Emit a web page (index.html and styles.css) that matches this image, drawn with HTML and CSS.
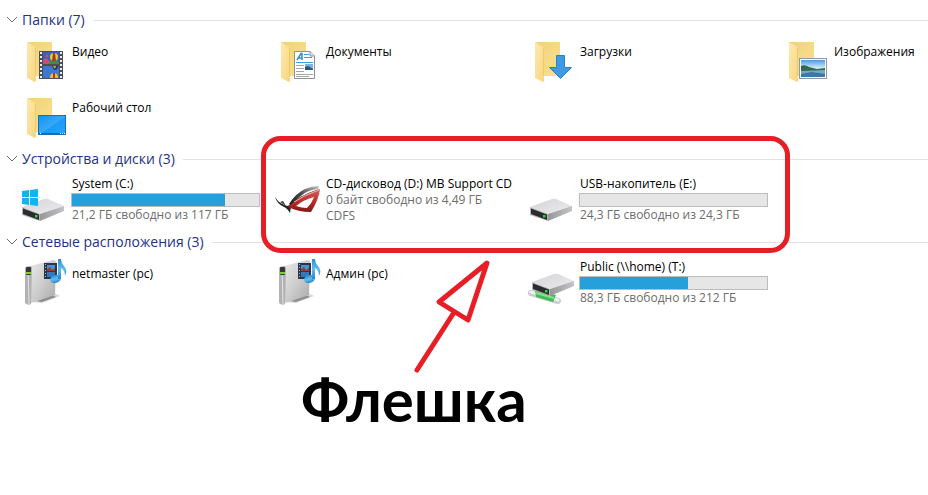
FILE: index.html
```
<!DOCTYPE html>
<html lang="ru">
<head>
    <meta charset="UTF-8">
    <meta name="viewport" content="width=device-width, initial-scale=1.0">
    <title>Этот компьютер</title>
    <link rel="stylesheet" href="styles.css">
</head>
<body>
    <!-- Общие части значков -->
    <svg class="defs" width="0" height="0" aria-hidden="true">
        <defs>
            <linearGradient id="folderBack" x1="0" y1="0" x2="1" y2="1">
                <stop offset="0" stop-color="#f0d27c"/>
                <stop offset="1" stop-color="#fbe08f"/>
            </linearGradient>
            <linearGradient id="folderFront" x1="0" y1="0" x2="1" y2="1">
                <stop offset="0" stop-color="#fdeab0"/>
                <stop offset="1" stop-color="#f7d57c"/>
            </linearGradient>
            <linearGradient id="driveTop" x1="0" y1="0" x2="1" y2="1">
                <stop offset="0" stop-color="#d4d4d6"/>
                <stop offset="1" stop-color="#ececee"/>
            </linearGradient>
            <linearGradient id="driveSide" x1="0" y1="0" x2="1" y2="0">
                <stop offset="0" stop-color="#97979a"/>
                <stop offset="1" stop-color="#c4c4c6"/>
            </linearGradient>
            <linearGradient id="screen" x1="0" y1="0" x2="1" y2="1">
                <stop offset="0" stop-color="#1693ee"/>
                <stop offset="0.5" stop-color="#35a9fa"/>
                <stop offset="0.55" stop-color="#1b9bf5"/>
                <stop offset="1" stop-color="#2aa5fb"/>
            </linearGradient>
            <linearGradient id="sky" x1="0" y1="0" x2="0" y2="1">
                <stop offset="0" stop-color="#4d9be0"/>
                <stop offset="0.5" stop-color="#d8effa"/>
            </linearGradient>
            <linearGradient id="case" x1="0" y1="0" x2="1" y2="1">
                <stop offset="0" stop-color="#e9e9e9"/>
                <stop offset="0.5" stop-color="#cdcdcd"/>
                <stop offset="1" stop-color="#a9a9a9"/>
            </linearGradient>
            <linearGradient id="note" x1="0" y1="0" x2="0" y2="1">
                <stop offset="0" stop-color="#2b8fd0"/>
                <stop offset="0.5" stop-color="#62bdec"/>
                <stop offset="1" stop-color="#2486cc"/>
            </linearGradient>
            <linearGradient id="wing" x1="0" y1="1" x2="1" y2="0">
                <stop offset="0" stop-color="#1c1c1c"/>
                <stop offset="0.5" stop-color="#4a4a4a"/>
                <stop offset="1" stop-color="#c8c8c8"/>
            </linearGradient>
            <linearGradient id="eye" x1="0" y1="0" x2="0" y2="1">
                <stop offset="0" stop-color="#d9605a"/>
                <stop offset="0.6" stop-color="#b52a28"/>
                <stop offset="1" stop-color="#821614"/>
            </linearGradient>

            <symbol id="folder" viewBox="0 0 48 48">
                <path d="M7 6H32V40H12Z" fill="url(#folderBack)"/>
                <path d="M7 6L15 11V40L16 40V45L15 46L7 42Z" fill="url(#folderFront)"/>
                <path d="M15.500 12V40" stroke="#ecca74" stroke-width="1"/>
            </symbol>

            <symbol id="drive" viewBox="0 0 48 48">
                <path d="M2 32L24 24Q26 23.500 28 24L44 31L20 39Z" fill="url(#driveTop)"/>
                <path d="M20 39L44 31V36L20 46Z" fill="url(#driveSide)"/>
                <path d="M2 32L20 39V46L2 40Z" fill="#b5b5b7"/>
                <path d="M3 33.500L19 39.500V45L3 39Z" fill="#2b2c2e"/>
                <rect x="15" y="40" width="2.500" height="2.500" fill="#35d04a"/>
            </symbol>

            <symbol id="server" viewBox="0 0 48 48">
                <path d="M12 44L34 35L40 38L22 45Z" fill="#d8d8d8"/>
                <path d="M16 43L32 37L36 39L22 44Z" fill="#8e8e8e"/>
                <path d="M10 8L33 2Q36 2 36 4L35 37L11 45Z" fill="url(#case)"/>
                <path d="M5 10Q6 8 10 8Q12 8 12 11L11 46Q8 48 5 45Z" fill="#b2b2b4"/>
                <path d="M8 9L9 46" stroke="#e4e4e4" stroke-width="1"/>
                <rect x="6" y="9" width="5" height="8" rx="1" fill="#35383a"/>
                <rect x="6" y="14" width="5" height="2" fill="#7fd22c"/>
                <rect x="24" y="5" width="13" height="16" fill="#26384c"/>
                <rect x="27" y="7" width="8" height="6" fill="#4593d6"/>
                <rect x="27" y="14" width="8" height="5" fill="#3677bb"/>
                <path d="M27 11L30 9L32 12L35 10V13H27Z" fill="#9c3c2c"/>
                <path d="M25.500 6V20" stroke="#a9b8c4" stroke-width="1" stroke-dasharray="1 2"/>
                <ellipse cx="35.500" cy="21" rx="5.500" ry="4" transform="rotate(-15 35.500 21)" fill="url(#note)"/>
                <path d="M38 21V1H41Q41 5 44 8Q48 12 45 18Q45 12 41 10V21Z" fill="url(#note)"/>
            </symbol>
        </defs>
    </svg>

    <main class="explorer">
        <section class="group">
            <h2 class="group-title">
                <button type="button"><svg class="chevron" viewBox="0 0 12 8"><path d="M1 1L6 6L11 1"/></svg>Папки (7)</button>
            </h2>
            <div class="items">
                <a class="item" href="#">
                    <svg class="icon" viewBox="0 0 48 48">
                        <use href="#folder"/>
                        <rect x="19" y="15" width="24" height="28" fill="#4c4f52"/>
                        <path d="M21 16V43M41 16V43" stroke="#eceff1" stroke-width="2" stroke-dasharray="2 2"/>
                        <rect x="23" y="16" width="16" height="12" fill="#3563bd"/>
                        <rect x="23" y="30" width="16" height="12" fill="#3c77d2"/>
                        <path d="M23 24L26 22L31 26V28H23Z" fill="#c94f79"/>
                        <path d="M29 26L33 24L39 26V28H29Z" fill="#3f8f3e"/>
                        <ellipse cx="34" cy="21" rx="4" ry="4" fill="#f1c82c"/>
                        <path d="M33 17H35L36 25H32Z" fill="#a5392b"/>
                        <circle cx="27" cy="20" r="1.500" fill="#d94b3a"/>
                        <path d="M32 30H39L36 34H34Z" fill="#27376b"/>
                        <path d="M33 30H36L35 33Z" fill="#e3a42b"/>
                        <path d="M30 42Q30 37 34 37Q38 37 38 42Z" fill="#efc02d"/>
                        <path d="M33 37H35V42H33Z" fill="#a5392b"/>
                    </svg>
                    <span class="info"><span class="name">Видео</span></span>
                </a>
                <a class="item" href="#">
                    <svg class="icon" viewBox="0 0 48 48">
                        <use href="#folder"/>
                        <path d="M20.500 15.500H36L40.500 20V42.500H20.500Z" fill="#fff" stroke="#8d9094"/>
                        <path d="M36 15.500V20H40.500" fill="#dfe2e5" stroke="#8d9094"/>
                        <path d="M23 24L27 17.500H28V24M25 22H28" fill="none" stroke="#2c8fd0" stroke-width="1.500"/>
                        <path d="M30 18.500H35M30 21.500H38M22 26.500H39" stroke="#3a9fdd"/>
                        <path d="M22 29.500H30M22 32.500H30M22 35.500H30M22 38.500H39M22 40.500H35" stroke="#a3a7aa"/>
                        <rect x="31" y="28" width="8" height="6" fill="#76b3e0"/>
                        <path d="M31 31L34 30L39 33V34H31Z" fill="#2d5574"/>
                    </svg>
                    <span class="info"><span class="name">Документы</span></span>
                </a>
                <a class="item" href="#">
                    <svg class="icon" viewBox="0 0 48 48">
                        <use href="#folder"/>
                        <path d="M28.500 19.500H36.500V31.500H43.500L32.500 42.500L21.500 31.500H28.500Z" fill="#3f9ae5" stroke="#2c7fc6"/>
                    </svg>
                    <span class="info"><span class="name">Загрузки</span></span>
                </a>
                <a class="item" href="#">
                    <svg class="icon" viewBox="0 0 48 48">
                        <use href="#folder"/>
                        <rect x="17.500" y="22.500" width="27" height="20" fill="#fff" stroke="#8f979f"/>
                        <rect x="19" y="24" width="24" height="17" fill="url(#sky)"/>
                        <path d="M19 30Q23 28 27 31L35 33L43 32V36H19Z" fill="#35684a"/>
                        <path d="M19 35L43 34V41H19Z" fill="#6fa9cc"/>
                        <path d="M19 38L30 36L43 38V41H19Z" fill="#3d77a6"/>
                    </svg>
                    <span class="info"><span class="name">Изображения</span></span>
                </a>
                <a class="item" href="#">
                    <svg class="icon" viewBox="0 0 48 48">
                        <use href="#folder"/>
                        <rect x="18.500" y="23.500" width="27" height="19" fill="url(#screen)" stroke="#1671ad"/>
                        <path d="M19 41.500H45" stroke="#1468a4"/>
                        <path d="M20 41.500H21M40 41.500H41M42 41.500H43M44 41.500H45" stroke="#fff"/>
                    </svg>
                    <span class="info"><span class="name">Рабочий стол</span></span>
                </a>
            </div>
        </section>

        <section class="group">
            <h2 class="group-title">
                <button type="button"><svg class="chevron" viewBox="0 0 12 8"><path d="M1 1L6 6L11 1"/></svg>Устройства и диски (3)</button>
            </h2>
            <div class="items">
                <a class="item drive" href="#">
                    <svg class="icon" viewBox="0 0 48 48">
                        <use href="#drive"/>
                        <path d="M2 16L9 15V22H2ZM10 15L18 14V22H10ZM2 23H9V30L2 29ZM10 23H18V31L10 30Z" fill="#0fb6ee"/>
                    </svg>
                    <span class="info">
                        <span class="name">System (C:)</span>
                        <span class="bar"><span class="fill" style="width: 82%"></span></span>
                        <span class="note">21,2 ГБ свободно из 117 ГБ</span>
                    </span>
                </a>
                <a class="item drive" href="#">
                    <svg class="icon" viewBox="0 0 48 48">
                        <path d="M15 29Q22 18 31 14Q38 11 45 11L44 14Q34 15 28 20Q22 24 19 29Z" fill="url(#wing)"/>
                        <path d="M1 22Q6 30 14 31Q22 22 45 14Q28 23 17 32L16 38Q13 33 10 32Q3 29 1 22Z" fill="#242424"/>
                        <path d="M6 27L12 31L9 26Z" fill="#3d3d3d"/>
                        <path d="M14 32Q26 20 46 14Q45 24 37 37Q24 37 14 32ZM22 31Q28 33 33 33Q38 28 40 22Q29 25 22 31Z" fill="url(#eye)" fill-rule="evenodd"/>
                        <path d="M20 27Q30 20 45 15" fill="none" stroke="#e7b4b0" stroke-width="1"/>
                    </svg>
                    <span class="info">
                        <span class="name">CD-дисковод (D:) MB Support CD</span>
                        <span class="note">0 байт свободно из 4,49 ГБ</span>
                        <span class="note">CDFS</span>
                    </span>
                </a>
                <a class="item drive" href="#">
                    <svg class="icon" viewBox="0 0 48 48"><use href="#drive"/></svg>
                    <span class="info">
                        <span class="name">USB-накопитель (E:)</span>
                        <span class="bar"></span>
                        <span class="note">24,3 ГБ свободно из 24,3 ГБ</span>
                    </span>
                </a>
            </div>
        </section>

        <section class="group">
            <h2 class="group-title">
                <button type="button"><svg class="chevron" viewBox="0 0 12 8"><path d="M1 1L6 6L11 1"/></svg>Сетевые расположения (3)</button>
            </h2>
            <div class="items">
                <a class="item" href="#">
                    <svg class="icon" viewBox="0 0 48 48"><use href="#server"/></svg>
                    <span class="info"><span class="name">netmaster (pc)</span></span>
                </a>
                <a class="item" href="#">
                    <svg class="icon" viewBox="0 0 48 48"><use href="#server"/></svg>
                    <span class="info"><span class="name">Админ (pc)</span></span>
                </a>
                <a class="item drive" href="#">
                    <svg class="icon" viewBox="0 0 48 48">
                        <path d="M3 35L30 43" stroke="#c9cdd0" stroke-width="6" stroke-linecap="round"/>
                        <path d="M3 34L30 42" stroke="#eef0f1" stroke-width="3" stroke-linecap="round"/>
                        <path d="M7 32L28 37L25 44L8 39Z" fill="#3fba57"/>
                        <path d="M8 35L26 40" stroke="#86e08f" stroke-width="2"/>
                        <use href="#drive" x="2" y="-8" width="48" height="48"/>
                    </svg>
                    <span class="info">
                        <span class="name">Public (\\home) (T:)</span>
                        <span class="bar"><span class="fill" style="width: 58%"></span></span>
                        <span class="note">88,3 ГБ свободно из 212 ГБ</span>
                    </span>
                </a>
            </div>
        </section>
    </main>

    <!-- Пометки поверх окна -->
    <svg class="marks" width="800" height="380" viewBox="0 0 800 380" aria-hidden="true">
        <rect x="263.500" y="138.500" width="524" height="112" rx="17"/>
        <path d="M487 263L439 302L468 320Z"/>
        <path d="M453 314L417 370"/>
    </svg>
    <p class="caption">Флешка</p>
</body>
</html>
```
FILE: styles.css
```
/* Общие стили */
* {
    box-sizing: border-box;
}

body {
    position: relative;
    min-height: 100vh;
    margin: 0;
    background: #fff;
    color: #000;
    font-family: "Open Sans", "Noto Sans", sans-serif;
    font-size: 12px;
    line-height: 16px;
}

.defs {
    position: absolute;
}

.explorer {
    padding-top: 8px;
}

/* Группы */
.group {
    margin-bottom: 3px;
}

.group-title {
    display: flex;
    align-items: center;
    gap: 8px;
    height: 24px;
    margin: 0;
    padding-left: 6px;
}

.group-title::after {
    content: "";
    flex: 1;
    height: 1px;
    background: #e2e2e2;
}

.group-title button {
    display: flex;
    align-items: center;
    gap: 4px;
    padding: 0;
    border: none;
    background: none;
    color: #1e3287;
    font-family: inherit;
    font-size: 14px;
    font-weight: normal;
    line-height: 24px;
    cursor: pointer;
}

.chevron {
    width: 12px;
    height: 8px;
    fill: none;
    stroke: #6d6d6d;
}

/* Элементы */
.items {
    display: grid;
    grid-template-columns: repeat(3, 254px) 1fr;
    grid-auto-rows: 56px;
    padding-left: 20px;
}

.item {
    display: flex;
    gap: 3px;
    padding: 4px 14px 0 0;
    color: inherit;
    text-decoration: none;
}

.icon {
    flex: none;
    width: 48px;
    height: 48px;
}

.info {
    flex: 1;
    min-width: 0;
    padding-top: 8px;
}

.drive .info {
    padding-top: 1px;
}

.name,
.note {
    display: block;
    padding-left: 1px;
    white-space: nowrap;
}

.note {
    color: #6d6d6d;
}

.bar {
    display: block;
    height: 14px;
    margin-top: 1px;
    border: 1px solid #bcbcbc;
    background: #e6e6e6;
}

.fill {
    display: block;
    height: 100%;
    background: #26a0da;
}

/* Пометки */
.marks {
    position: absolute;
    top: 0;
    left: 0;
    fill: none;
    stroke: #e81e26;
    stroke-width: 5;
    stroke-linejoin: round;
    stroke-linecap: round;
    pointer-events: none;
}

.caption {
    position: absolute;
    top: 364px;
    left: 301px;
    margin: 0;
    font-family: Lato, "Open Sans", sans-serif;
    font-size: 60px;
    font-weight: bold;
    line-height: 70px;
}
```
